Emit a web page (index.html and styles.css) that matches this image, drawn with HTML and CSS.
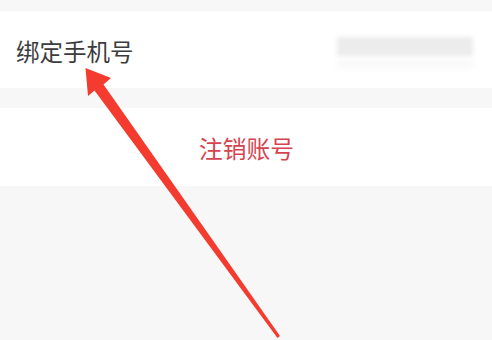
FILE: index.html
```html
<!DOCTYPE html>
<html lang="zh">
<head>
<meta charset="utf-8">
<link rel="stylesheet" href="styles.css">
</head>
<body>
<div class="page">
  <div class="row bind">
    <span class="label">绑定手机号</span>
    <div class="masked">
      <div class="blur-main"></div>
      <div class="blur-sub"></div>
    </div>
  </div>
  <div class="row cancel">
    <span class="danger">注销账号</span>
  </div>
  <svg class="arrow" width="492" height="340" viewBox="0 0 492 340">
    <polygon points="85.5,68 111,78 103.5,84.5 280,336 277.5,338 94.5,90.5 88,96" fill="#f43b2f"/>
  </svg>
</div>
</body>
</html>
```
FILE: styles.css
```css
html, body {
  margin: 0;
  padding: 0;
  background: #f7f7f7;
}
.page {
  position: relative;
  width: 492px;
  height: 340px;
  overflow: hidden;
  padding-top: 11px;
  box-sizing: border-box;
  font-family: "Noto Sans CJK SC", "Noto Sans", sans-serif;
}
.row {
  background: #fff;
  display: flex;
  align-items: center;
}
.bind {
  height: 77px;
  padding: 2px 19px 0 16px;
  box-sizing: border-box;
  justify-content: space-between;
}
.label {
  font-size: 23.5px;
  color: #3c3c3c;
}
.masked {
  width: 136px;
  display: flex;
  flex-direction: column;
  gap: 3px;
  margin-top: 4px;
}
.blur-main {
  height: 19px;
  background: #ececec;
  filter: blur(2px);
}
.blur-sub {
  height: 10px;
  background: #f9f9f9;
  filter: blur(2px);
}
.cancel {
  margin-top: 20px;
  height: 78px;
  justify-content: center;
  padding-left: 1px;
}
.danger {
  font-size: 23.75px;
  color: #d6434e;
}
.arrow {
  position: absolute;
  left: 0;
  top: 0;
}
```
